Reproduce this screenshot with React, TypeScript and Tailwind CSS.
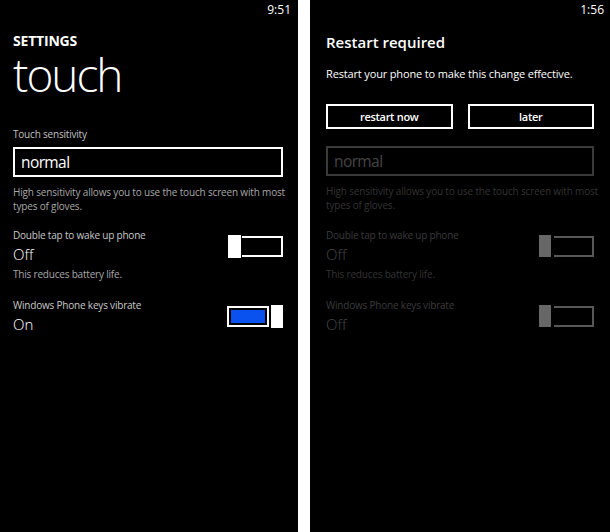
import React from 'react';

const font = { fontFamily: '"Open Sans", "Noto Sans", sans-serif' };

function ToggleOff({ dim }: { dim?: boolean }) {
  return (
    <div className="flex items-center">
      <div className={dim ? "w-[12px] h-[22px] bg-[#676767]" : "w-[13px] h-[23px] bg-white"} />
      <div
        className={
          dim
            ? "ml-[3px] w-[40px] h-[21px] border-y-2 border-r-2 border-[#585858]"
            : "ml-[1px] w-[41px] h-[21px] border-y-2 border-r-2 border-white"
        }
      />
    </div>
  );
}

function ToggleOn() {
  return (
    <div className="flex items-center">
      <div className="w-[42px] h-[21px] border-2 border-white p-[2px]">
        <div className="w-full h-full bg-[#0a52f0]" />
      </div>
      <div className="ml-[2px] w-[12px] h-[23px] bg-white" />
    </div>
  );
}

function SettingRow({
  label,
  value,
  note,
  toggle,
  dim,
}: {
  label: string;
  value: string;
  note?: string;
  toggle: React.ReactNode;
  dim?: boolean;
}) {
  return (
    <div className="flex flex-col">
      <div className="flex items-center justify-between">
        <div>
          <p className={"text-[10px] leading-[14px] tracking-[-0.2px] " + (dim ? "text-[#3b3b3b]" : "text-[#c8c8c8]")}>
            {label}
          </p>
          <p className={"mt-[2px] text-[15px] leading-[20px] font-light " + (dim ? "text-[#454545]" : "text-white")}>
            {value}
          </p>
        </div>
        {toggle}
      </div>
      {note && (
        <p className={"mt-[3px] text-[10px] leading-[14px] tracking-[-0.2px] " + (dim ? "text-[#333333]" : "text-[#a8a8a8]")}>
          {note}
        </p>
      )}
    </div>
  );
}

function Description({ dim }: { dim?: boolean }) {
  return (
    <p
      className={
        "mt-[8px] text-[10px] leading-[14px] tracking-[-0.17px] whitespace-nowrap " +
        (dim ? "text-[#333333]" : "text-[#a8a8a8]")
      }
    >
      High sensitivity allows you to use the touch screen with most
      <br />
      types of gloves.
    </p>
  );
}

function LeftPhone() {
  return (
    <div className="w-[298px] h-full bg-black text-white flex flex-col">
      <div className="h-[20px] flex justify-end pr-[7px] pt-[2px] text-[12px] leading-[16px]">9:51</div>
      <div className="pl-[13px] pr-[15px] flex flex-col">
        <p className="mt-[12px] text-[14px] leading-[17px] font-bold tracking-[-0.2px]">SETTINGS</p>
        <p className="text-[46px] leading-[50px] font-light tracking-[-2px]">touch</p>
        <p className="mt-[28px] text-[10px] leading-[14px] tracking-[-0.2px] text-[#c0c0c0]">Touch sensitivity</p>
        <div className="mt-[6px] h-[30px] border-2 border-white flex items-center pl-[6px]">
          <span className="text-[15.5px] leading-[20px] tracking-[-0.6px]">normal</span>
        </div>
        <Description />
        <div className="mt-[15px]">
          <SettingRow label="Double tap to wake up phone" value="Off" note="This reduces battery life." toggle={<ToggleOff />} />
        </div>
        <div className="mt-[17px]">
          <SettingRow label="Windows Phone keys vibrate" value="On" toggle={<ToggleOn />} />
        </div>
      </div>
    </div>
  );
}

function RightPhone() {
  return (
    <div className="w-[300px] h-full bg-black text-white flex flex-col">
      <div className="h-[20px] flex justify-end pr-[6px] pt-[2px] text-[12px] leading-[16px]">1:56</div>
      <div className="pl-[16px] pr-[16px] flex flex-col">
        <p className="mt-[12px] text-[15px] leading-[20px] font-semibold">Restart required</p>
        <p className="mt-[14px] text-[11px] leading-[15px] tracking-[-0.15px]">Restart your phone to make this change effective.</p>
        <div className="mt-[23px] flex gap-[15px]">
          <button className="flex-1 h-[25px] border-2 border-white text-[11px] font-semibold leading-[14px] tracking-[-0.3px]">
            restart now
          </button>
          <button className="flex-1 h-[25px] border-2 border-white text-[11px] font-semibold leading-[14px] tracking-[-0.3px]">
            later
          </button>
        </div>
        <div className="mt-[17px] h-[30px] border-2 border-[#3a3a3a] flex items-center pl-[6px]">
          <span className="text-[15.5px] leading-[20px] tracking-[-0.6px] text-[#454545]">normal</span>
        </div>
        <Description dim />
        <div className="mt-[16px]">
          <SettingRow dim label="Double tap to wake up phone" value="Off" note="This reduces battery life." toggle={<ToggleOff dim />} />
        </div>
        <div className="mt-[17px]">
          <SettingRow dim label="Windows Phone keys vibrate" value="Off" toggle={<ToggleOff dim />} />
        </div>
      </div>
    </div>
  );
}

export default function App() {
  return (
    <div className="w-[610px] h-[532px] bg-white flex" style={font}>
      <LeftPhone />
      <div className="w-[12px]" />
      <RightPhone />
    </div>
  );
}
